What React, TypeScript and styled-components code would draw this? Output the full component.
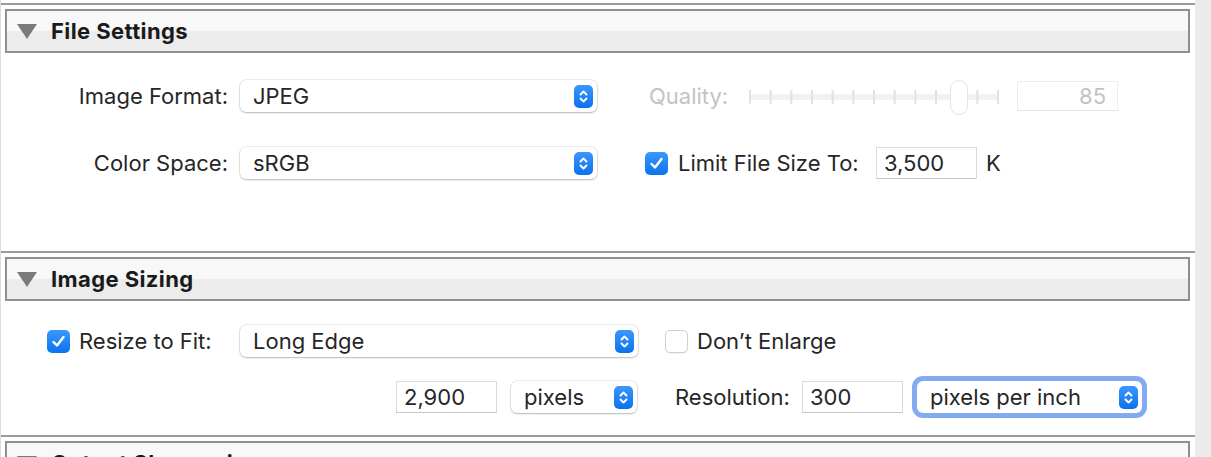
import React from "react";
import styled, { createGlobalStyle } from "styled-components";

const GlobalStyle = createGlobalStyle`
  body {
    margin: 0;
    background: #ffffff;
    font-family: Inter, "Noto Sans", "Liberation Sans", sans-serif;
    color: #262626;
  }
`;

const Page = styled.div`
  display: flex;
  height: 457px;
  overflow: hidden;
`;

const Main = styled.div`
  flex: 1;
  border-left: 1px solid #dcdcdc;
`;

const ScrollTrack = styled.div`
  width: 16px;
  background: #ebebeb;
`;

const Section = styled.section<{ $first?: boolean }>`
  margin-top: ${(p) => (p.$first ? "3px" : "0")};
  border-top: 2px solid #9b9b9b;
  padding-top: 4px;
`;

const Header = styled.div`
  box-sizing: border-box;
  height: 44px;
  margin: 0 5px 0 4px;
  border: 2px solid #8f8f8f;
  background: linear-gradient(#f8f8f8 0, #f8f8f8 50%, #ececec 50%, #ececec 100%);
  display: flex;
  align-items: center;
  padding-left: 10px;
`;

const Title = styled.span`
  margin-left: 14px;
  font-size: 22px;
  font-weight: 700;
  letter-spacing: 0.4px;
  color: #1a1a1a;
`;

const Body = styled.div<{ $height: number; $top: number }>`
  box-sizing: border-box;
  height: ${(p) => p.$height}px;
  padding-top: ${(p) => p.$top}px;
`;

const Row = styled.div<{ $gap?: number }>`
  display: flex;
  align-items: center;
  height: 32px;
  margin-top: ${(p) => p.$gap ?? 0}px;
`;

const Label = styled.span<{ $width?: number; $ml?: number; $right?: boolean; $muted?: boolean }>`
  flex: none;
  box-sizing: border-box;
  width: ${(p) => (p.$width ? `${p.$width}px` : "auto")};
  margin-left: ${(p) => p.$ml ?? 0}px;
  text-align: ${(p) => (p.$right ? "right" : "left")};
  font-size: 22px;
  white-space: nowrap;
  color: ${(p) => (p.$muted ? "#c3c3c3" : "#262626")};
`;

const SelectBox = styled.div<{ $width: number; $ml?: number; $focused?: boolean }>`
  flex: none;
  box-sizing: border-box;
  width: ${(p) => p.$width}px;
  height: 32px;
  margin-left: ${(p) => p.$ml ?? 0}px;
  border-radius: 6px;
  background: #ffffff;
  box-shadow: ${(p) =>
    p.$focused
      ? "0 0 0 5px rgba(96, 148, 238, 0.78)"
      : "0 0 0 0.5px rgba(0,0,0,0.14), 0 1px 2px rgba(0,0,0,0.22)"};
  display: flex;
  align-items: center;
  padding-left: 13px;
  font-size: 22px;
  color: #262626;
`;

const SelectText = styled.span`
  flex: 1;
  white-space: nowrap;
`;

const Stepper = styled.span`
  width: 19px;
  height: 23px;
  margin-right: 4px;
  border-radius: 5px;
  background: linear-gradient(#3b97ff, #0b72ee);
  display: flex;
  align-items: center;
  justify-content: center;
`;

const Field = styled.div<{ $width?: number; $ml?: number; $disabled?: boolean }>`
  flex: none;
  box-sizing: border-box;
  width: ${(p) => p.$width ?? 101}px;
  height: ${(p) => (p.$disabled ? 30 : 32)}px;
  margin-left: ${(p) => p.$ml ?? 0}px;
  border: 1px solid ${(p) => (p.$disabled ? "#eeeeee" : "#dadada")};
  border-bottom-color: ${(p) => (p.$disabled ? "#e6e6e6" : "#c6c6c6")};
  background: #ffffff;
  display: flex;
  align-items: center;
  justify-content: ${(p) => (p.$disabled ? "flex-end" : "flex-start")};
  padding: 0 ${(p) => (p.$disabled ? 11 : 0)}px 0 ${(p) => (p.$disabled ? 0 : 7)}px;
  font-size: 22px;
  color: ${(p) => (p.$disabled ? "#c3c3c3" : "#262626")};
`;

const Check = styled.span<{ $checked?: boolean; $ml?: number }>`
  flex: none;
  box-sizing: border-box;
  width: 23px;
  height: 23px;
  margin-left: ${(p) => p.$ml ?? 0}px;
  border-radius: 5px;
  display: flex;
  align-items: center;
  justify-content: center;
  background: ${(p) => (p.$checked ? "linear-gradient(#3b97ff, #0b72ee)" : "#ffffff")};
  border: ${(p) => (p.$checked ? "none" : "1px solid #cfcfcf")};
  box-shadow: ${(p) => (p.$checked ? "none" : "0 1px 1px rgba(0,0,0,0.06)")};
`;

const SliderWrap = styled.div`
  flex: none;
  display: flex;
  align-items: center;
  margin-top: 4px;
`;

const Triangle = () => (
  <svg width="20" height="15" viewBox="0 0 20 15">
    <path d="M0 0 H20 L10 15 Z" fill="#7a7a7a" />
  </svg>
);

const Chevrons = () => (
  <svg width="11" height="15" viewBox="0 0 11 15">
    <path
      d="M2.5 5.5 L5.5 2.5 L8.5 5.5 M2.5 9.5 L5.5 12.5 L8.5 9.5"
      fill="none"
      stroke="#ffffff"
      strokeWidth="1.9"
      strokeLinecap="round"
      strokeLinejoin="round"
    />
  </svg>
);

const Tick = () => (
  <svg width="15" height="13" viewBox="0 0 15 13">
    <path
      d="M2.5 7 L6 10.5 L12.5 2"
      fill="none"
      stroke="#ffffff"
      strokeWidth="2.4"
      strokeLinecap="round"
      strokeLinejoin="round"
    />
  </svg>
);

const Select = ({
  value,
  width,
  ml,
  focused,
}: {
  value: string;
  width: number;
  ml?: number;
  focused?: boolean;
}) => (
  <SelectBox $width={width} $ml={ml} $focused={focused}>
    <SelectText>{value}</SelectText>
    <Stepper>
      <Chevrons />
    </Stepper>
  </SelectBox>
);

const QualitySlider = () => {
  const ticks = Array.from({ length: 13 }, (_, i) => 2 + (i * 248) / 12);
  return (
    <SliderWrap>
      <svg width="252" height="36" viewBox="0 0 252 36">
        <rect x="1" y="14" width="250" height="6" rx="3" fill="#f2f2f2" />
        {ticks.map((x) => (
          <rect key={x} x={x - 1} y="10" width="2" height="14" fill="#e2e2e2" />
        ))}
        <rect x="202.5" y="0.5" width="17" height="34" rx="8.5" fill="#ffffff" stroke="#e3e3e3" />
      </svg>
    </SliderWrap>
  );
};

export default function App() {
  return (
    <Page>
      <GlobalStyle />
      <Main>
        <Section $first>
          <Header>
            <Triangle />
            <Title>File Settings</Title>
          </Header>
          <Body $height={198} $top={27}>
            <Row>
              <Label $width={227} $right>
                Image Format:
              </Label>
              <Select value="JPEG" width={357} ml={12} />
              <Label $ml={52} $width={99} $muted>
                Quality:
              </Label>
              <QualitySlider />
              <Field $ml={17} $disabled>
                85
              </Field>
            </Row>
            <Row $gap={35}>
              <Label $width={227} $right>
                Color Space:
              </Label>
              <Select value="sRGB" width={357} ml={12} />
              <Check $checked $ml={48}>
                <Tick />
              </Check>
              <Label $ml={10} $width={198}>
                Limit File Size To:
              </Label>
              <Field>3,500</Field>
              <Label $ml={9}>K</Label>
            </Row>
          </Body>
        </Section>

        <Section>
          <Header>
            <Triangle />
            <Title>Image Sizing</Title>
          </Header>
          <Body $height={134} $top={24}>
            <Row>
              <Check $checked $ml={46}>
                <Tick />
              </Check>
              <Label $ml={9} $width={161}>
                Resize to Fit:
              </Label>
              <Select value="Long Edge" width={398} />
              <Check $ml={27} />
              <Label $ml={9}>Don’t Enlarge</Label>
            </Row>
            <Row $gap={24}>
              <Field $ml={395}>2,900</Field>
              <Select value="pixels" width={126} ml={14} />
              <Label $ml={38} $width={127}>
                Resolution:
              </Label>
              <Field>300</Field>
              <Select value="pixels per inch" width={225} ml={14} focused />
            </Row>
          </Body>
        </Section>

        <Section>
          <Header>
            <Triangle />
            <Title>Output Sharpening</Title>
          </Header>
        </Section>
      </Main>
      <ScrollTrack />
    </Page>
  );
}
